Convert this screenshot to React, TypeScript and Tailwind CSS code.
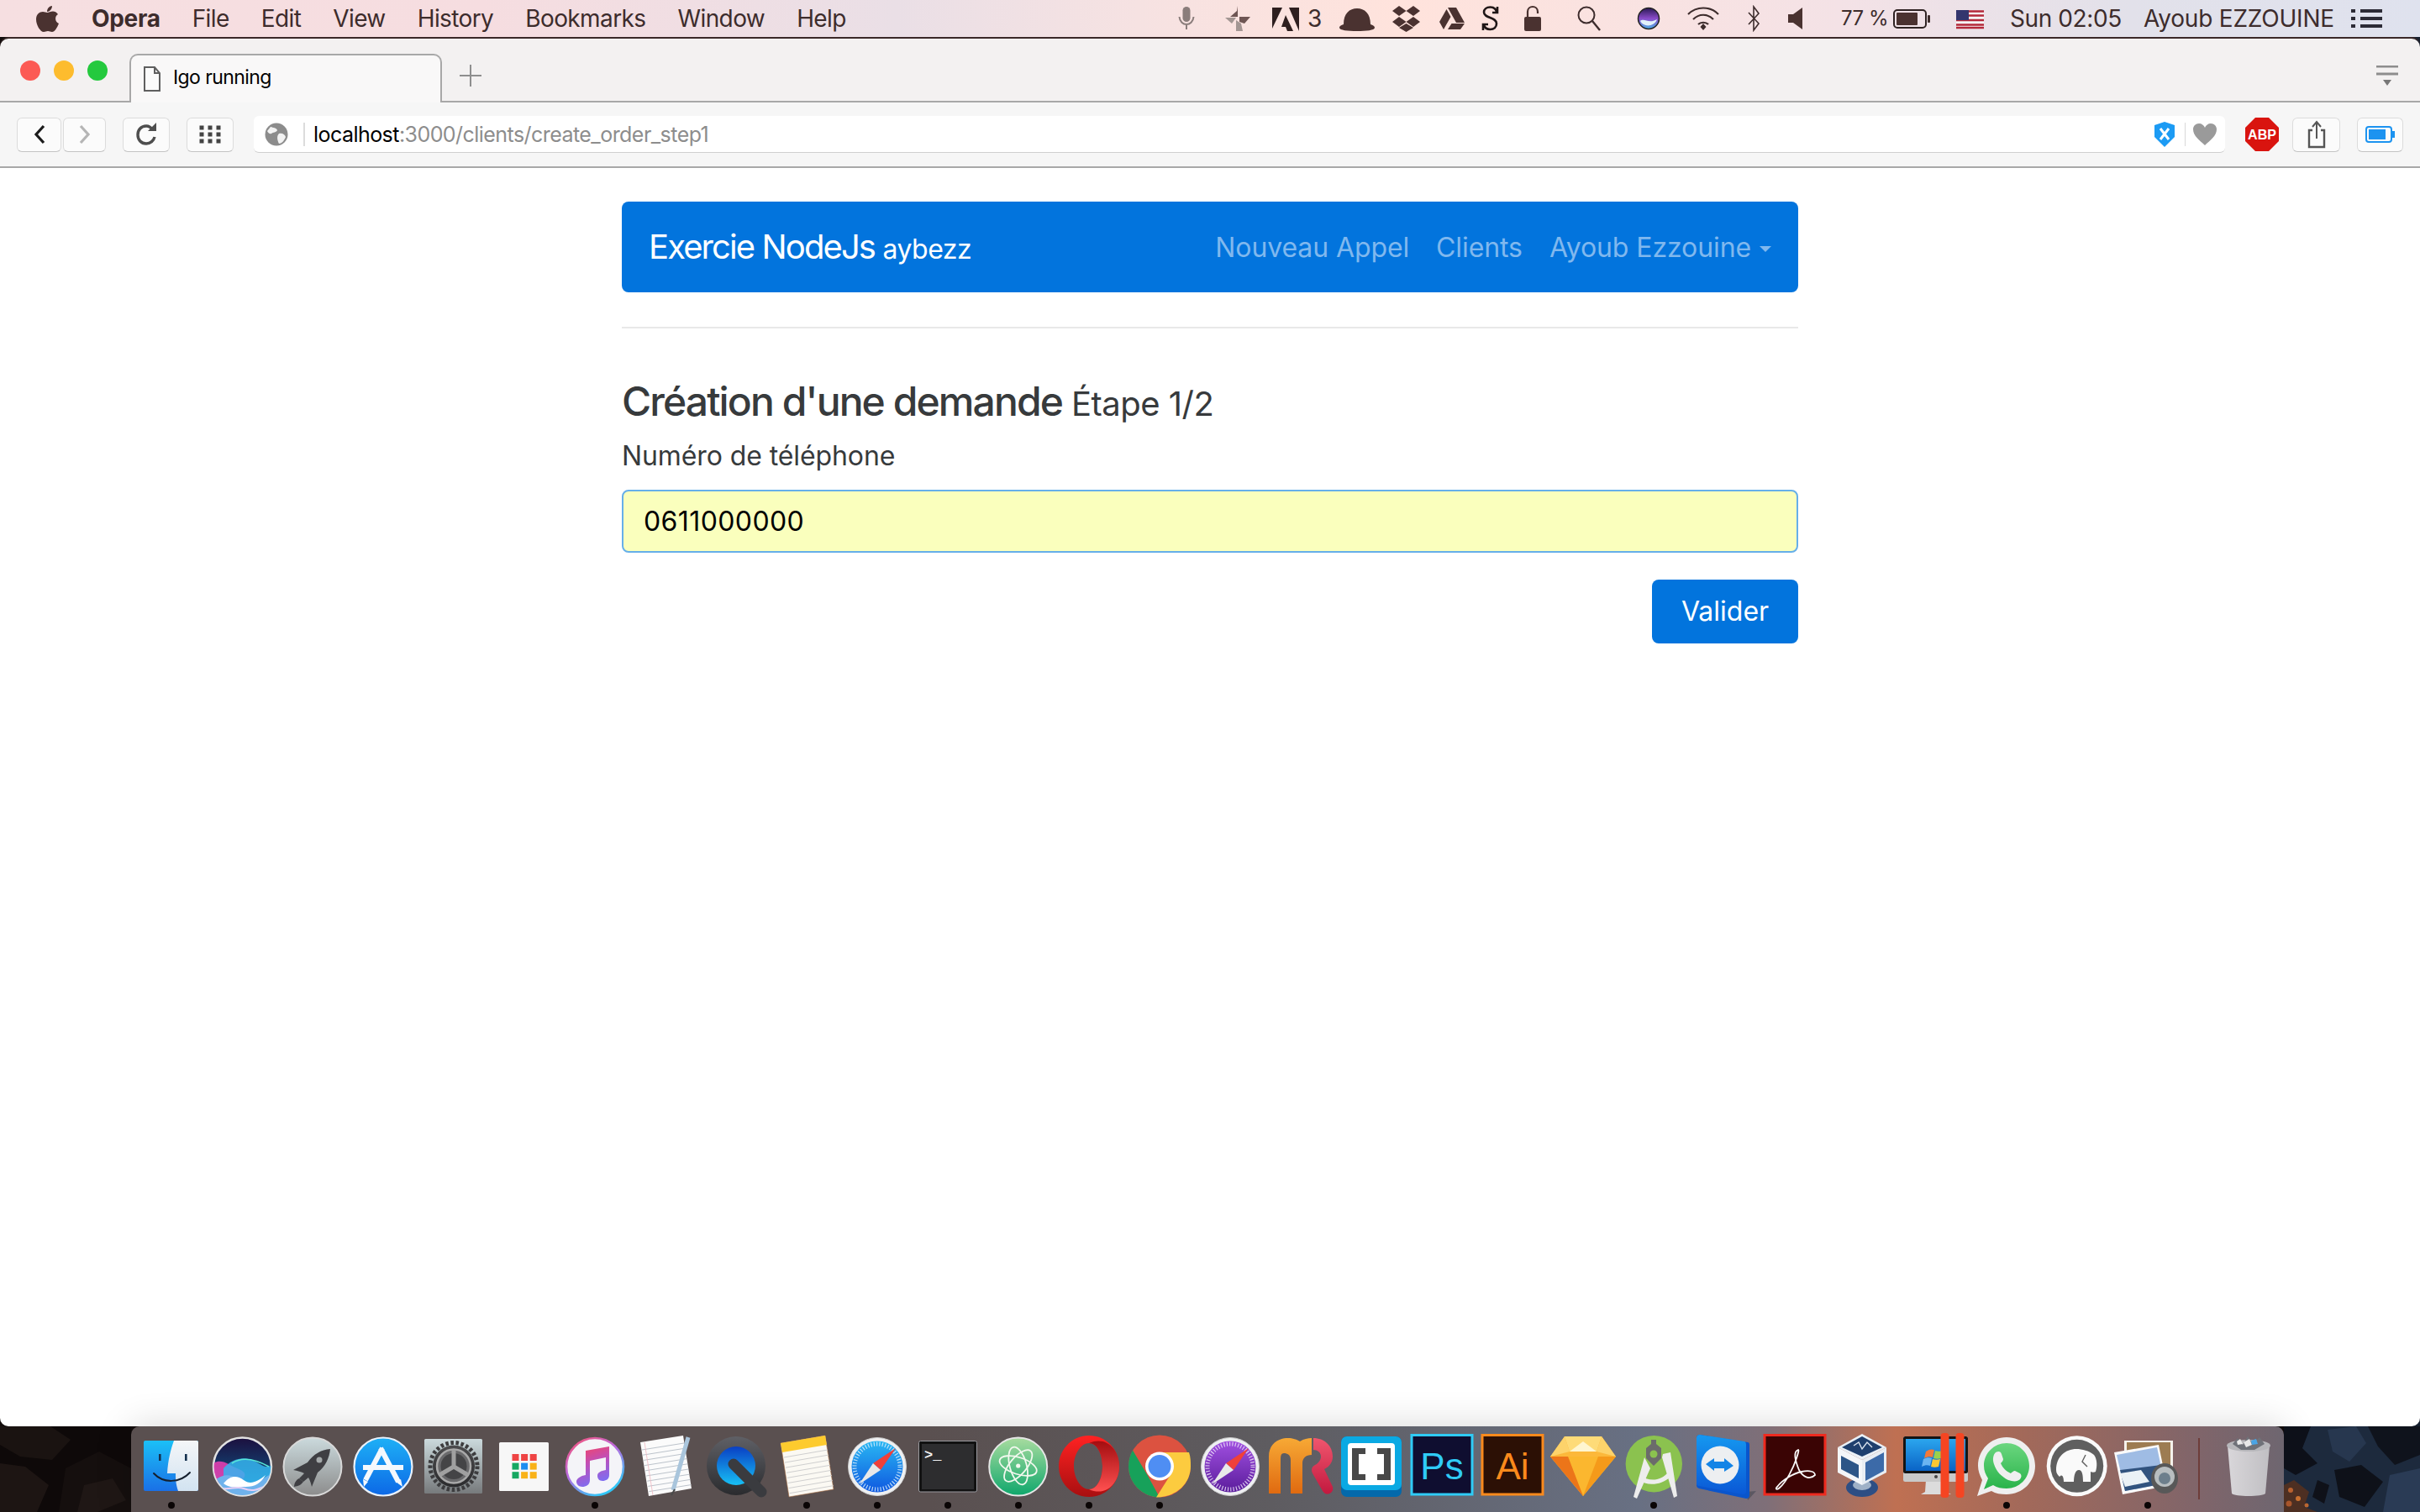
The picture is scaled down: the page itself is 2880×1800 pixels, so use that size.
import React from "react";

type SvgProps = { children: React.ReactNode };
const V = ({ children }: SvgProps) => (
  <svg viewBox="0 0 84 84" className="w-[84px] h-[84px] block overflow-visible">{children}</svg>
);
const LG = ({ id, a, b, c, x2 = 0, y2 = 1 }: { id: string; a: string; b: string; c?: string; x2?: number; y2?: number }) => (
  <linearGradient id={id} x1="0" y1="0" x2={x2} y2={y2}>
    <stop offset="0" stopColor={a} />
    {c ? <stop offset="0.5" stopColor={c} /> : null}
    <stop offset="1" stopColor={b} />
  </linearGradient>
);
const paperLines = (x0: number, y0: number, x1: number, y1: number, dx: number, dy: number, n: number, color: string) =>
  Array.from({ length: n }, (_, i) => (
    <line key={i} x1={x0 + dx * i} y1={y0 + dy * i} x2={x1 + dx * i} y2={y1 + dy * i} stroke={color} strokeWidth="1" />
  ));
const compassTicks = (color: string) => (
  <circle cx="42" cy="42" r="27" fill="none" stroke={color} strokeWidth="5" strokeDasharray="1.2 2.2" opacity="0.85" />
);

const Finder = () => (
  <V>
    <defs><LG id="fa" a="#1bc0f7" b="#1a70e6" /><LG id="fb" a="#f4f6f8" b="#d2e3f1" /></defs>
    <rect x="9" y="11" width="65" height="60" rx="2" fill="url(#fa)" />
    <path d="M45 11H72a2 2 0 0 1 2 2V69a2 2 0 0 1-2 2H50C47 62 47 56 47 50H37C38 34 41 22 45 11Z" fill="url(#fb)" />
    <rect x="27" y="27" width="2.6" height="8" fill="#15314f" />
    <rect x="58" y="27" width="2.6" height="8" fill="#15314f" />
    <path d="M21 50C32 62 52 62 64 49" fill="none" stroke="#15202e" strokeWidth="2" strokeLinecap="round" />
  </V>
);
const Siri = () => (
  <V>
    <defs>
      <LG id="sa" a="#1c0f3e" b="#0f86ad" c="#143a6a" />
      <clipPath id="sc"><circle cx="42.5" cy="42" r="34" /></clipPath>
    </defs>
    <circle cx="42.5" cy="42" r="34.5" fill="url(#sa)" stroke="#e2e2e2" strokeWidth="2.4" />
    <g clipPath="url(#sc)">
      <path d="M8 38C18 32 26 40 36 44S50 52 38 62L8 62Z" fill="#e23fb0" opacity="0.9" />
      <path d="M20 44C32 30 48 30 58 36S72 44 78 40V62H20Z" fill="#35b5f0" opacity="0.85" />
      <path d="M30 38C42 30 56 32 74 42" fill="none" stroke="#57e6d8" strokeWidth="1.6" />
      <path d="M8 60C18 50 28 50 38 58S58 62 78 50V80H8Z" fill="#6fb2ec" />
      <path d="M20 62C28 52 36 52 44 58S60 60 70 52C64 62 58 66 46 66S28 68 20 62Z" fill="#ffffff" />
      <path d="M14 66C24 72 34 64 44 68S60 70 72 64" fill="none" stroke="#e8d0f5" strokeWidth="2" />
    </g>
  </V>
);
const Launchpad = () => (
  <V>
    <defs><LG id="la" a="#cbdadd" b="#8c8c8c" /></defs>
    <circle cx="42" cy="42" r="34.5" fill="url(#la)" stroke="#d9d9d9" strokeWidth="2" />
    <path d="M63 21C52 22 43 27 36 37L19 46C24 47 29 48 32 50L26 56L31 60L37 55C39 58 40 62 41 66L48 49C57 42 62 32 63 21Z" fill="#3f3f43" />
    <path d="M26 56C22 58 20 62 20 66C25 65 28 64 31 60Z" fill="#3f3f43" />
    <circle cx="50" cy="34" r="3.5" fill="#a4a9aa" />
  </V>
);
const AppStore = () => (
  <V>
    <defs><LG id="aa" a="#1eb0f6" b="#0c68e6" /></defs>
    <circle cx="42" cy="42" r="34.5" fill="url(#aa)" stroke="#eaf2fb" strokeWidth="2.2" />
    <rect x="18" y="40" width="48" height="6" fill="#f4f8fd" />
    <path d="M41 20L21 58" stroke="#f4f8fd" strokeWidth="6" />
    <path d="M39 20L60 60" stroke="#f4f8fd" strokeWidth="6" />
    <path d="M18 57L24 60L19 66Z M57 60L63 57L65 66Z" fill="#f4f8fd" />
  </V>
);
const Prefs = () => (
  <V>
    <defs><LG id="pa" a="#cbdadd" b="#777a7c" /><LG id="pb" a="#4c4c4e" b="#2b2b2d" /></defs>
    <rect x="7" y="9" width="69" height="65" rx="1.5" fill="url(#pa)" />
    <circle cx="42" cy="41.5" r="28" fill="none" stroke="#3c3c3e" strokeWidth="5" strokeDasharray="3.5 2.6" />
    <circle cx="42" cy="41.5" r="25" fill="url(#pb)" />
    <circle cx="42" cy="41.5" r="20" fill="#6a6a6c" stroke="#a9a9a9" strokeWidth="2.5" />
    <circle cx="42" cy="41.5" r="15.5" fill="#444446" />
    <path d="M42 42L42 22M42 42L59 52M42 42L25 52" stroke="#a0a0a0" strokeWidth="5" />
  </V>
);
const GridApp = () => {
  const cols = ["#ef4444", "#ef4444", "#ef4444", "#16a862", "#1d8df0", "#f9b218", "#16a862", "#f9b218", "#f9b218"];
  return (
    <V>
      <rect x="12" y="13" width="59" height="58" rx="1.5" fill="#f7f7f7" />
      {cols.map((c, i) => (
        <rect key={i} x={27.5 + (i % 3) * 10.6} y={27 + Math.floor(i / 3) * 10.6} width="8" height="8" fill={c} />
      ))}
    </V>
  );
};
const Music = () => (
  <V>
    <defs><LG id="ma" a="#fb5270" b="#30c6f7" c="#b96ae0" x2={0.6} /><LG id="mb" a="#f8445f" b="#7f6cf0" c="#c04fb8" x2={0.3} /></defs>
    <circle cx="42" cy="42" r="34" fill="#f4f4f8" stroke="url(#ma)" strokeWidth="2.6" />
    <path d="M31 23L59 18V52C59 57 55 59 51 59C47 59 45 56 45 53C45 49 49 47 55 46V31L36 35V58C36 64 31 66 27 66C23 66 20 63 20 60C20 56 25 53 31 52Z" fill="url(#mb)" />
  </V>
);
const TextEdit = () => (
  <V>
    <polygon points="12,13 63,5 73,68 22,77" fill="#fbfbfb" />
    {paperLines(14, 22, 64, 14, 1.05, 6.2, 9, "#bcc3cb")}
    <path d="M17 13L27 76" stroke="#f0b8c0" strokeWidth="0.8" />
    <path d="M69 7L51 70" stroke="#a9c5dc" strokeWidth="5" />
    <path d="M53 69L49 76" stroke="#4a4a4a" strokeWidth="2" />
  </V>
);
const QuickTime = () => (
  <V>
    <defs><LG id="qa" a="#5f6066" b="#2a2b2e" /><LG id="qb" a="#0a3fc4" b="#17c0f5" /></defs>
    <circle cx="42" cy="41" r="35" fill="url(#qa)" />
    <circle cx="42" cy="41" r="23" fill="url(#qb)" />
    <path d="M39 39L72 72" stroke="#3a3b3f" strokeWidth="13" strokeLinecap="round" />
  </V>
);
const Notes = () => (
  <V>
    <polygon points="11,14 64,5 74,69 21,78" fill="#fbf9f3" stroke="#a5693f" strokeWidth="0.6" />
    <polygon points="11,14 64,5 66,16 13,25" fill="#fdcb2e" />
    {paperLines(15, 31, 67, 22, 0.95, 6.1, 8, "#cfcfcf")}
  </V>
);
const Safari = () => (
  <V>
    <defs><LG id="na" a="#29b7f3" b="#0f58e0" /></defs>
    <circle cx="42" cy="42" r="34.5" fill="#eef0f2" stroke="#d0d0d0" strokeWidth="1" />
    <circle cx="42" cy="42" r="30.5" fill="url(#na)" />
    {compassTicks("#d5ecfb")}
    <polygon points="64,20 37,38 46,46" fill="#f0403a" />
    <polygon points="20.5,63 37,38 46,46" fill="#e9e9e9" />
  </V>
);
const Terminal = () => (
  <V>
    <rect x="7.5" y="11.5" width="69" height="60.5" rx="2" fill="#111" stroke="#9a9aa0" strokeWidth="1" />
    <rect x="11" y="15" width="62" height="54" fill="#2d2d2f" />
    <text x="14" y="33" fill="#f2f2f2" fontFamily="'Liberation Mono',monospace" fontSize="17" fontWeight="700">&gt;_</text>
  </V>
);
const Atom = () => (
  <V>
    <defs><LG id="ta" a="#a8dc9f" b="#0fa76c" /></defs>
    <circle cx="41.7" cy="42" r="34.5" fill="url(#ta)" stroke="#e6e6e6" strokeWidth="2" />
    <g fill="none" stroke="#f2f8ee" strokeWidth="1.8">
      <ellipse cx="41.7" cy="41" rx="23" ry="10" transform="rotate(18 41.7 41)" />
      <ellipse cx="41.7" cy="41" rx="23" ry="10" transform="rotate(75 41.7 41)" />
      <ellipse cx="41.7" cy="41" rx="23" ry="10" transform="rotate(-50 41.7 41)" />
    </g>
    <circle cx="41.7" cy="41" r="2.6" fill="#f2f8ee" />
  </V>
);
const Opera = () => (
  <V>
    <defs>
      <LG id="oa" a="#ff2222" b="#a80f10" />
      <LG id="ob" a="#a30d10" b="#ff5050" />
    </defs>
    <path fillRule="evenodd" d="M42 5C22 5 6 21 6 41.5S22 78 42 78S78 62 78 41.5S62 5 42 5ZM42 14C51 14 58 26 58 41.5S51 69 42 69S24 57 24 41.5S33 14 42 14Z" fill="url(#oa)" />
    <path d="M42 14C51 14 58 26 58 41.5S51 69 42 69C62 78 78 62 78 41.5S62 5 42 14Z" fill="url(#ob)" />
  </V>
);
const Chrome = () => (
  <V>
    <circle cx="42" cy="41.5" r="37" fill="#dc5240" />
    <path d="M10 22.5L28 53L42 78.5C22 78.5 5 62 5 41.5C5 34 7 28 10 22.5Z" fill="#17a15a" />
    <path d="M42 25H77C79 31 79 36 79 41.5C79 62 62 78.5 38 78.5L56 50Z" fill="#fccb3f" />
    <circle cx="42" cy="41.5" r="17" fill="#fff" />
    <circle cx="42" cy="41.5" r="13.5" fill="#4f8ef3" />
  </V>
);
const Webkit = () => (
  <V>
    <defs><LG id="wa" a="#a04fe0" b="#5b1d9c" /></defs>
    <circle cx="42" cy="42" r="34.5" fill="#eef0f2" stroke="#cccccc" strokeWidth="1" />
    <circle cx="42" cy="42" r="30.5" fill="url(#wa)" />
    {compassTicks("#eadcf7")}
    <polygon points="64,20 37,38 46,46" fill="#f0403a" />
    <polygon points="20.5,63 37,38 46,46" fill="#e9e9e9" />
  </V>
);
const MR = () => (
  <V>
    <defs><LG id="ra" a="#f7a935" b="#e06a10" /><LG id="rb" a="#f0566e" b="#c2193f" /></defs>
    <path d="M4 74V30C4 16 14 8 27 8C32 8 38 10 41 12C46 9 50 8 55 8V28C48 28 44 32 44 38V74H30V34C30 28 26 26 22 26C18 26 18 30 18 34V74Z" fill="url(#ra)" />
    <path d="M57 8C70 8 80 17 80 30C80 37 76 42 70 45L80 66C82 74 72 78 68 71L56 50C54 46 55 42 59 40C63 38 66 34 66 30C66 25 62 22 57 22Z" fill="url(#rb)" />
  </V>
);
const Brackets = () => (
  <V>
    <rect x="6" y="6" width="72" height="72" rx="7" fill="#0469ab" />
    <rect x="6" y="6" width="72" height="64" rx="7" fill="#0aa9e3" />
    <rect x="14" y="14" width="56" height="50" rx="4" fill="#ffffff" />
    <path d="M35 20H19V58H35V51H27V27H35Z" fill="#484848" />
    <path d="M49 20H65V58H49V51H57V27H49Z" fill="#484848" />
  </V>
);
const AdobeBox = ({ t, bg, c }: { t: string; bg: string; c: string }) => (
  <V>
    <rect x="6" y="4.5" width="72" height="70.5" fill={bg} stroke={c} strokeWidth="3" />
    <text x="42" y="57" textAnchor="middle" fill={c} fontFamily="'Liberation Sans',sans-serif" fontSize="44">{t}</text>
  </V>
);
const Sketch = () => (
  <V>
    <polygon points="20,6 64,6 81,30 42,77 3,30" fill="#fcb83a" />
    <polygon points="20,6 64,6 58,24 26,24" fill="#fedb78" />
    <polygon points="26,24 58,24 42,12" fill="#fff6d0" />
    <polygon points="3,30 81,30 42,77" fill="#f59a1a" />
    <polygon points="24,30 60,30 42,77" fill="#fbb72f" />
    <polygon points="3,30 20,6 26,24" fill="#fdd36b" />
    <polygon points="81,30 64,6 58,24" fill="#fdd36b" />
    <polygon points="3,30 24,30 42,77" fill="#e4571a" opacity="0.55" />
  </V>
);
const AndroidStudio = () => (
  <V>
    <circle cx="42.3" cy="38.7" r="33.7" fill="#8bc24f" />
    <path d="M31 31L18 78L22 80L38 44Z M52 31L66 79L70 77L62 25L53 27Z" fill="#ededed" />
    <path d="M26 52C36 60 50 60 60 48L62 54C50 65 34 65 24 58Z" fill="#ededed" />
    <path d="M39 10H45V15L51 20V32L42 41L33 32V20L39 15Z" fill="#6b6b6b" />
    <circle cx="42" cy="27" r="4.5" fill="#8bc24f" />
  </V>
);
const TeamViewer = () => (
  <V>
    <defs><LG id="va" a="#1598f0" b="#0a58d6" /></defs>
    <path d="M68 72L80 71L70 82Z" fill="#3a3f4c" opacity="0.5" />
    <path d="M13 4L70 13C71 13 72 14 72 16V76C72 79 70 80 68 80L12 68C10 67 9 66 9 64V8C9 5 11 4 13 4Z" fill="#0a55cc" />
    <path d="M13 4L66 12C67 12 68 14 68 16V72C68 74 66 75 64 75L12 65C10 65 9 64 9 62V8C9 5 11 4 13 4Z" fill="url(#va)" />
    <circle cx="37" cy="40" r="22.5" fill="#edeff1" />
    <path d="M20 39L30 32V36H42V32L53 41L42 48V44H30V47Z" fill="#1484e6" />
  </V>
);
const Acrobat = () => (
  <V>
    <rect x="6" y="4.5" width="72" height="70.5" fill="#3a0404" stroke="#ee2a1f" strokeWidth="3" />
    <path d="M46 22C40 24 42 34 47 46C52 55 60 58 66 52C66 48 60 46 50 48C40 50 27 58 21 66C18 69 21 70 24 67C32 60 40 44 44 32C46 26 47 22 46 22Z" fill="none" stroke="#f8f8f8" strokeWidth="1.8" />
  </V>
);
const VBox = () => (
  <V>
    <ellipse cx="38" cy="67" rx="19" ry="11" fill="#2d4e84" />
    <ellipse cx="38" cy="64" rx="11" ry="6" fill="#9fb1c7" />
    <polygon points="38,3 67,19 38,34 9,19" fill="#eaf0f6" />
    <polygon points="38,6 62,19 38,30 14,19" fill="#1e3f6e" />
    <polygon points="9,19 38,34 38,64 9,49" fill="#f4f6f9" />
    <polygon points="13,29 34,40 34,56 13,45" fill="#2c5587" />
    <polygon points="67,19 38,34 38,64 67,49" fill="#e8edf3" />
    <polygon points="42,37 64,25 64,47 42,59" fill="#3c6aa8" />
    <path d="M28 17L34 13L38 21L44 13L50 19" fill="none" stroke="#dbe4ef" strokeWidth="1.4" />
  </V>
);
const Parallels = () => (
  <V>
    <defs><LG id="xa" a="#2ba6ee" b="#0a63c6" /></defs>
    <path d="M30 58H52L54 72L60 75H24L29 72Z" fill="#dcdcdc" />
    <rect x="3" y="6" width="77" height="54" rx="2.5" fill="#c9c9c9" />
    <rect x="3" y="6" width="77" height="44" rx="2.5" fill="#141414" />
    <rect x="6" y="9" width="71" height="38" fill="url(#xa)" />
    <path d="M30 24C34 21 37 21 40 22L38 31C35 30 32 30 28 32Z" fill="#f2793a" />
    <path d="M41 23C44 24 47 24 50 23L48 32C45 33 42 33 39 32Z" fill="#9cd14a" />
    <path d="M27 33C31 31 34 31 37 32L35 41C32 40 29 40 25 42Z" fill="#6ab4f2" />
    <path d="M38 33C41 34 44 34 47 33L45 42C42 43 39 43 36 42Z" fill="#f9c733" />
    <circle cx="42" cy="54" r="2" fill="#444" />
    <rect x="47.5" y="2" width="10" height="77" rx="4" fill="#f54522" />
    <rect x="65.5" y="2" width="10" height="77" rx="4" fill="#f54522" />
  </V>
);
const WhatsApp = () => (
  <V>
    <defs><LG id="ha" a="#6bd67f" b="#29b34a" /></defs>
    <path d="M7 77L13 58C10 52 8 47 8 41C8 22 23 7 42 7S76 22 76 41S61 75 42 75C35 75 29 74 24 71Z" fill="#efefef" />
    <path d="M15 69L20 56C17 51 15 47 15 41C15 26 27 14 42 14S69 26 69 41S57 68 42 68C36 68 31 67 26 64Z" fill="url(#ha)" />
    <path d="M29 25C33 23 35 24 36 27L38 33C38 35 36 37 35 38C37 43 42 48 47 50C48 49 50 47 52 47L58 50C60 52 60 54 58 57C55 60 50 60 44 58C36 54 30 48 27 39C25 33 26 28 29 25Z" fill="#efefef" />
  </V>
);
const Mamp = () => (
  <V>
    <circle cx="41.7" cy="41.3" r="36" fill="#fafafa" />
    <circle cx="41.7" cy="41.3" r="31.5" fill="#5f5f5f" />
    <path d="M17 46C17 30 28 21 41 21C48 21 56 23 62 28C66 33 66 42 64 48C62 49 60 49 58 48L58 60H49C49 52 48 46 44 46C40 46 38 52 38 60H26C26 54 24 50 21 54C19 52 17 50 17 46Z" fill="#fafafa" />
    <path d="M52 28L48 36L54 42" fill="none" stroke="#5f5f5f" strokeWidth="1.4" />
  </V>
);
const Preview = () => (
  <V>
    <polygon points="14,11 72,11 72,58 14,58" fill="#f5f2ec" />
    <rect x="17" y="13" width="52" height="42" fill="#9d7c52" />
    <polygon points="2,25 55,16 65,65 12,75" fill="#fafafa" />
    <polygon points="5,28 53,19 62,62 15,71" fill="#9fbce4" />
    <polygon points="9,46 58,40 62,62 15,71" fill="#31537f" />
    <polygon points="9,50 34,46 44,60 15,66" fill="#eaf1f6" />
    <ellipse cx="62" cy="56" rx="16" ry="18" fill="#585858" />
    <ellipse cx="62" cy="54" rx="12" ry="12" fill="#b8bec0" />
    <ellipse cx="62" cy="56" rx="7" ry="7" fill="#6d7f8c" />
  </V>
);
const Trash = () => (
  <V>
    <defs><LG id="za" a="#e3e3e6" b="#c9c9cc" x2={1} y2={0} /></defs>
    <path d="M18 17H68L63 74C60 78 26 78 23 74Z" fill="url(#za)" opacity="0.9" />
    <ellipse cx="43" cy="17" rx="26" ry="7" fill="#b7b7bb" />
    <path d="M24 15L30 8L36 16L42 6L48 15L56 7L62 15L50 22H34Z" fill="#6f7279" />
    <path d="M37 13L44 9L47 16L40 19Z" fill="#e8e8e8" />
    <path d="M46 11L52 9L54 15L47 16Z" fill="#49a5e6" />
    <path d="M29 12L33 9L36 15L30 16Z" fill="#ececec" />
  </V>
);

const dockItems: { icon: React.ReactNode; running?: boolean }[] = [
  { icon: <Finder />, running: true },
  { icon: <Siri /> },
  { icon: <Launchpad /> },
  { icon: <AppStore /> },
  { icon: <Prefs /> },
  { icon: <GridApp /> },
  { icon: <Music />, running: true },
  { icon: <TextEdit /> },
  { icon: <QuickTime /> },
  { icon: <Notes />, running: true },
  { icon: <Safari />, running: true },
  { icon: <Terminal />, running: true },
  { icon: <Atom />, running: true },
  { icon: <Opera />, running: true },
  { icon: <Chrome />, running: true },
  { icon: <Webkit /> },
  { icon: <MR /> },
  { icon: <Brackets /> },
  { icon: <AdobeBox t="Ps" bg="#0f0e30" c="#2fcbf6" /> },
  { icon: <AdobeBox t="Ai" bg="#2c1005" c="#fb8a1c" /> },
  { icon: <Sketch /> },
  { icon: <AndroidStudio />, running: true },
  { icon: <TeamViewer /> },
  { icon: <Acrobat /> },
  { icon: <VBox /> },
  { icon: <Parallels /> },
  { icon: <WhatsApp />, running: true },
  { icon: <Mamp /> },
  { icon: <Preview />, running: true },
];

const brown = "#4a3230";
const MI = ({ w, ml, children }: { w: number; ml: string; children: React.ReactNode }) => (
  <svg viewBox={`0 0 ${w} 32`} width={w} height={32} className={`block shrink-0 ${ml}`}>{children}</svg>
);

function MenuBar() {
  return (
    <div className="h-[44px] shrink-0 flex items-center pl-[42px] pr-[45px] text-[28px] text-[#3d2c2c] bg-[linear-gradient(90deg,#f6dfe1_0%,#f6dde0_20%,#eadfe6_37%,#f6e2e2_47%,#ffe3dc_58%,#f4e2e6_76%,#e2e1ea_88%,#dfe2ee_100%)]">
      <svg viewBox="0 0 28 32" width={28} height={32} className="block shrink-0">
        <path d="M20 1C20 5 17 8 14 8C14 4 17 1 20 1ZM14 9C16 9 18 7.5 21 7.5C23 7.5 25.5 8.5 27 11C23 13 23 20 28 22C26 27 23 32 20 32C18 32 17 31 15 31C13 31 12 32 10 32C6 32 1 24 1 17C1 11 5 8 9 8C11 8 13 9 14 9Z" fill={brown} />
      </svg>
      <div className="flex items-center gap-[38px] ml-[39px] tracking-[-0.6px]">
        <span className="font-bold text-[#3d2c2c] tracking-[-0.3px]">Opera</span>
        <span>File</span>
        <span>Edit</span>
        <span>View</span>
        <span>History</span>
        <span>Bookmarks</span>
        <span>Window</span>
        <span>Help</span>
      </div>
      <div className="ml-auto flex items-center">
        <MI w={20} ml="">
          <rect x="5.5" y="2" width="9" height="18" rx="4.5" fill="#8a7d7b" />
          <path d="M1.5 14C2 20 6 23 10 23S18 20 18.5 14M10 23V29" fill="none" stroke="#8a7d7b" strokeWidth="2" />
        </MI>
        <MI w={31} ml="ml-[35px]">
          <path d="M16 1L16 14L7 14L15 7Z M18 14H31L24 22L18 20Z" fill="#6e5553" />
          <path d="M1 15H14L9 22Z M14 18V31L22 31L20 22Z" fill="#a39693" />
        </MI>
        <MI w={32} ml="ml-[26px]">
          <path d="M0 3H12L0 28Z M20 3H32V31ZM16 12L25 31H18L16 26H11Z" fill="#2e1f1f" />
        </MI>
        <span className="w-[15px] ml-[10px] text-[#3d2c2c]">3</span>
        <MI w={42} ml="ml-[23px]">
          <path d="M5 23C5 10 12 4 21 4S37 10 37 23C41 24 42 26 42 27C42 30 32 31 21 31S0 30 0 27C0 26 1 24 5 23Z" fill={brown} />
        </MI>
        <MI w={33} ml="ml-[21px]">
          <path d="M8 1L16.5 7L8 13L0 7ZM25 1L33 7L25 13L16.5 7ZM8 14L16.5 20L8 26L0 20ZM25 14L33 20L25 26L16.5 20ZM8 27L16.5 22L25 27L16.5 32Z" fill={brown} />
        </MI>
        <MI w={30} ml="ml-[23px]">
          <path d="M10 3H20L30 21H20ZM8.5 5L13.5 14L5 29L0 20ZM14.5 22H30L25 29H10Z" fill={brown} />
        </MI>
        <MI w={21} ml="ml-[20px]">
          <path d="M18 8C17 4 14 2.5 10.5 2.5C6 2.5 3 5 3 8.5C3 16 18 14 18 22C18 26 15 29 10.5 29C7 29 4 27 3 24M19 2V9H13M2 30V23H8" fill="none" stroke="#1f1616" strokeWidth="2.6" />
        </MI>
        <MI w={20} ml="ml-[30px]">
          <path d="M4 14V8C4 4 7 2 10 2S16 4 16 8V10" fill="none" stroke={brown} strokeWidth="2.2" />
          <rect x="0" y="14" width="20" height="17" rx="2" fill={brown} />
        </MI>
        <MI w={28} ml="ml-[43px]">
          <circle cx="11" cy="12" r="9.5" fill="none" stroke="#3d2c2c" strokeWidth="2" />
          <path d="M18 19L27 30" stroke="#3d2c2c" strokeWidth="2.4" />
        </MI>
        <MI w={30} ml="ml-[42px]">
          <defs><LG id="tsa" a="#2a1a55" b="#4fb1e8" c="#8a4bc9" /></defs>
          <circle cx="15" cy="16" r="12.5" fill="url(#tsa)" stroke="#222" strokeWidth="1.5" />
          <path d="M5 19C10 15 15 23 25 17C22 26 9 27 5 19Z" fill="#e2f1fa" />
        </MI>
        <MI w={40} ml="ml-[30px]">
          <path d="M2 11C12 1 28 1 38 11M8 17C15 10 25 10 32 17M14 23C17 20 23 20 26 23" fill="none" stroke="#3d2c2c" strokeWidth="2.2" />
          <path d="M16.5 26L20 22L23.5 26L20 30Z" fill="#3d2c2c" />
        </MI>
        <MI w={18} ml="ml-[31px]">
          <path d="M3 9L15 22L9 30V2L15 10L3 23" fill="none" stroke="#3d2c2c" strokeWidth="1.6" />
        </MI>
        <MI w={18} ml="ml-[32px]">
          <path d="M0 11H6L17 3V29L6 21H0Z" fill={brown} />
        </MI>
        <span className="w-[52px] ml-[45px] whitespace-nowrap text-[24px] tracking-[-0.5px] text-[#3d2c2c]">77 %</span>
        <MI w={45} ml="ml-[10px]">
          <rect x="1" y="6" width="38" height="21" rx="4" fill="none" stroke="#2e2222" strokeWidth="2" />
          <rect x="4" y="9" width="25" height="15" rx="1" fill={brown} />
          <rect x="41" y="12" width="3" height="9" rx="1" fill="#3d2c2c" />
        </MI>
        <MI w={33} ml="ml-[30px]">
          <rect x="0" y="6" width="33" height="22" fill="#f5f5f5" />
          <path d="M0 7.5H33M0 12.5H33M0 18H33M0 23.5H33M0 27H33" stroke="#b4293a" strokeWidth="2.4" />
          <rect x="0" y="6" width="15" height="12" fill="#34366e" />
        </MI>
        <span className="w-[132px] ml-[31px] whitespace-nowrap tracking-[-0.4px]">Sun 02:05</span>
        <span className="w-[228px] ml-[27px] whitespace-nowrap tracking-[-0.2px]">Ayoub EZZOUINE</span>
        <MI w={37} ml="ml-[19px]">
          <path d="M0 7H5M11 7H37M0 16H5M11 16H37M0 25H5M11 25H37" stroke="#2c2b36" strokeWidth="4" />
        </MI>
      </div>
    </div>
  );
}

const ToolBtn = ({ w, children, ml = "" }: { w: string; children: React.ReactNode; ml?: string }) => (
  <div className={`${w} ${ml} h-[41px] shrink-0 rounded-[6px] bg-[#fbfbfb] border border-[#dcdcdc] border-b-[#c4c4c4] flex items-center justify-center`}>
    {children}
  </div>
);

function TabBar() {
  return (
    <div className="h-[76px] shrink-0 flex items-end bg-[#f3f1f1] border-b-[2px] border-[#a8a8a8] rounded-t-[10px] pl-[24px] pr-[26px]">
      <div className="flex items-center gap-[16px] h-[74px] pt-[2px] self-center">
        <span className="w-[24px] h-[24px] rounded-full bg-[#fc5a54]" />
        <span className="w-[24px] h-[24px] rounded-full bg-[#fdbc2e]" />
        <span className="w-[24px] h-[24px] rounded-full bg-[#24c93e]" />
      </div>
      <div className="relative -mb-[2px] ml-[26px] w-[372px] h-[58px] rounded-t-[10px] border-x-[2px] border-t-[2px] border-[#a8a8a8] bg-[#f9f8f8] flex items-center pl-[14px]">
        <svg viewBox="0 0 22 30" width={22} height={30} className="block shrink-0">
          <path d="M2 1H14L20 8V29H2ZM14 1V8H20" fill="#fbfbfb" stroke="#5f5f5f" strokeWidth="2" />
        </svg>
        <span className="ml-[14px] pb-[3px] text-[23px] text-black tracking-[-0.6px]">Igo running</span>
      </div>
      <svg viewBox="0 0 28 28" width={28} height={28} className="block ml-[20px] mb-[16px] self-end">
        <path d="M14 1V27M1 14H27" stroke="#8e8e8e" strokeWidth="2" />
      </svg>
      <svg viewBox="0 0 26 26" width={26} height={26} className="block ml-auto mb-[16px] self-end">
        <path d="M0 1H26M0 10H26" stroke="#8d8d8d" strokeWidth="3" />
        <path d="M8 17H18L13 24Z" fill="#777" />
      </svg>
    </div>
  );
}

function ToolBar() {
  return (
    <div className="h-[78px] shrink-0 flex items-center bg-[#f6f6f6] border-b-[2px] border-[#a8a8a8] pl-[20px] pr-[20px]">
      <ToolBtn w="w-[53px]">
        <svg viewBox="0 0 16 24" width={16} height={24}><path d="M13 2L4 12L13 22" fill="none" stroke="#1c1c1c" strokeWidth="3.2" /></svg>
      </ToolBtn>
      <ToolBtn w="w-[51px]" ml="ml-[2px]">
        <svg viewBox="0 0 16 24" width={16} height={24}><path d="M3 2L12 12L3 22" fill="none" stroke="#b5b5b5" strokeWidth="3.2" /></svg>
      </ToolBtn>
      <ToolBtn w="w-[56px]" ml="ml-[20px]">
        <svg viewBox="0 0 26 28" width={26} height={28}>
          <path d="M21 9C19 6 16 4 13 4C7 4 3 8.5 3 14.5S7 25 13 25C18 25 22 21.5 23 17" fill="none" stroke="#4e4e4e" strokeWidth="3.4" />
          <path d="M15 10H25V0Z" fill="#4e4e4e" />
        </svg>
      </ToolBtn>
      <ToolBtn w="w-[56px]" ml="ml-[20px]">
        <svg viewBox="0 0 28 24" width={28} height={24}>
          {[0, 1, 2, 3, 4, 5, 6, 7, 8].map((i) => (
            <rect key={i} x={1.5 + (i % 3) * 10} y={1.5 + Math.floor(i / 3) * 8} width="5" height="5" fill="#444" />
          ))}
        </svg>
      </ToolBtn>
      <div className="ml-[24px] flex-1 h-[44px] rounded-[6px] bg-white border-b border-[#cfcfcf] flex items-center pl-[13px] pr-[10px]">
        <svg viewBox="0 0 28 28" width={28} height={28} className="block shrink-0">
          <circle cx="14" cy="14" r="13.5" fill="#8c8c8c" />
          <path d="M7 5C10 6 14 6 15 9C14 12 10 11 8 13C6 14 4 12 3 10ZM17 13C21 12 24 14 25 17C23 22 20 25 17 25C15 21 14 16 17 13Z" fill="#f2f2f2" />
        </svg>
        <span className="w-[2px] h-[28px] bg-[#dcdcdc] ml-[18px] shrink-0" />
        <span className="ml-[10px] pt-[2px] text-[25px] tracking-[-0.55px] whitespace-nowrap text-[#8d8d8d]">
          <span className="text-black">localhost</span>:3000/clients/create_order_step1
        </span>
        <svg viewBox="0 0 24 30" width={24} height={30} className="block ml-auto shrink-0">
          <path d="M12 0L24 4V18L12 30L0 18V4Z" fill="#1c9bf4" />
          <path d="M7 8L17 21M17 8L7 21" stroke="#fff" strokeWidth="3" />
        </svg>
        <span className="w-[1px] h-[28px] bg-[#d9d9d9] ml-[12px] shrink-0" />
        <svg viewBox="0 0 28 26" width={28} height={26} className="block ml-[9px] shrink-0">
          <path d="M14 26C8 20 0 15 0 7C0 3 3 0 7 0C10 0 13 2 14 5C15 2 18 0 21 0C25 0 28 3 28 7C28 15 20 20 14 26Z" fill="#9a9a9a" />
        </svg>
      </div>
      <div className="relative ml-[24px] w-[40px] h-[40px] shrink-0">
        <svg viewBox="0 0 40 40" width={40} height={40} className="block">
          <polygon points="12,0 28,0 40,12 40,28 28,40 12,40 0,28 0,12" fill="#d9140f" />
          <text x="20" y="26" textAnchor="middle" fill="#fff" fontSize="16" fontWeight="700" fontFamily="'Liberation Sans',sans-serif">ABP</text>
        </svg>
      </div>
      <ToolBtn w="w-[57px]" ml="ml-[16px]">
        <svg viewBox="0 0 24 34" width={24} height={34}>
          <path d="M7 12H3V32H21V12H17" fill="none" stroke="#555" strokeWidth="2.4" />
          <path d="M12 22V3M7 8L12 2L17 8" fill="none" stroke="#555" strokeWidth="2" />
        </svg>
      </ToolBtn>
      <ToolBtn w="w-[55px]" ml="ml-[20px]">
        <svg viewBox="0 0 36 24" width={36} height={24}>
          <rect x="1" y="3" width="30" height="18" rx="3" fill="none" stroke="#1c93f0" strokeWidth="2" />
          <rect x="4" y="6" width="20" height="12" fill="#1c93f0" />
          <rect x="32" y="8" width="3" height="8" fill="#1c93f0" />
        </svg>
      </ToolBtn>
    </div>
  );
}

function Page() {
  return (
    <div className="flex-1 min-h-0 bg-white rounded-b-[10px] overflow-hidden">
      <div className="w-[1400px] mx-auto pt-[40px]">
        <nav className="h-[108px] rounded-[8px] bg-[#0274dd] flex items-center px-[32px]">
          <span className="text-[40px] text-white tracking-[-1.9px] whitespace-nowrap">
            Exercie NodeJs <small className="text-[32px] tracking-[-0.5px]">aybezz</small>
          </span>
          <div className="ml-auto flex items-center gap-[32px] pt-[1px] text-[32px] text-[#80b8ee] tracking-[-0.1px] whitespace-nowrap">
            <span>Nouveau Appel</span>
            <span>Clients</span>
            <span className="flex items-center">
              Ayoub Ezzouine
              <span className="ml-[10px] mt-[4px] border-x-[7px] border-x-transparent border-t-[7px] border-t-[#80b8ee]" />
            </span>
          </div>
        </nav>
        <hr className="mt-[41px] border-t-[2px] border-[#e8e8e8]" />
        <h3 className="mt-[51px] text-[48px] leading-[72px] font-medium text-[#373a3c] tracking-[-1.9px] whitespace-nowrap">
          Création d'une demande <small className="text-[40px] font-normal tracking-[-0.5px]">Étape 1/2</small>
        </h3>
        <label className="block mt-[2px] text-[32px] leading-[48px] text-[#373a3c] tracking-[-0.1px]">Numéro de téléphone</label>
        <input
          readOnly
          value="0611000000"
          className="block w-full mt-[16px] h-[75px] rounded-[8px] border-[2px] border-[#66afe9] bg-[#faffbd] px-[24px] text-[32px] tracking-[0.4px] text-black outline-none"
        />
        <div className="mt-[32px] flex justify-end">
          <button className="w-[174px] h-[76px] rounded-[8px] bg-[#0274dd] text-[32px] text-white">Valider</button>
        </div>
      </div>
    </div>
  );
}

function WallLeft() {
  return (
    <svg viewBox="0 0 156 102" width={156} height={102} className="block w-[156px] shrink-0">
      <rect width="156" height="102" fill="#0e0909" />
      <path d="M0 0H60L84 16L62 40L24 36L0 22Z" fill="#1a1311" />
      <path d="M0 44L30 48L58 70L44 102H0Z" fill="#1d1513" />
      <path d="M78 50L118 30L156 50V102H70Z" fill="#150f0e" />
      <path d="M100 70L134 62L150 88L116 102H92Z" fill="#1f1715" />
    </svg>
  );
}
function WallRight() {
  return (
    <svg viewBox="0 0 162 102" width={162} height={102} className="block w-[162px] shrink-0">
      <rect width="162" height="102" fill="#1d2a3d" />
      <path d="M0 0H32L22 26L40 44L14 58L0 50Z" fill="#0d1019" />
      <path d="M52 4L86 0L98 20L78 42L58 30Z" fill="#27374f" />
      <path d="M100 0H162V34L132 46L112 24Z" fill="#0f131c" />
      <path d="M60 52L92 46L118 66L96 96L66 84Z" fill="#0e1119" />
      <path d="M126 58L162 50V102H118Z" fill="#2a3b55" />
      <path d="M0 70L12 64L30 78L24 96L40 102H0Z" fill="#4d2f22" />
      <circle cx="8" cy="76" r="3" fill="#b8612f" />
      <circle cx="17" cy="86" r="3" fill="#c9702f" />
      <circle cx="6" cy="92" r="3.5" fill="#a8552b" />
      <circle cx="27" cy="94" r="2.5" fill="#bb6630" />
      <path d="M40 64L54 70L48 92L34 84Z" fill="#0f1119" />
    </svg>
  );
}

function Dock() {
  return (
    <div className="relative z-10 h-[102px] shrink-0 flex bg-[#120c0c]">
      <WallLeft />
      <div className="flex-1 flex pl-[6px] pt-[6px] rounded-t-[10px] shadow-[0_0_44px_rgba(0,0,0,0.16)] bg-[linear-gradient(90deg,#5a5050_0%,#5a5050_37%,#5e5c60_53%,#687083_70%,#7f6f78_76%,#bf7052_82%,#a2695a_88%,#80656a_96%,#6e6670_100%)]">
        {dockItems.map((d, i) => (
          <div key={i} className="w-[84px] shrink-0 flex flex-col items-center">
            {d.icon}
            {d.running ? <span className="w-[8px] h-[8px] rounded-full bg-[#0a0505]" /> : null}
          </div>
        ))}
        <div className="w-[2px] h-[73px] mt-[8px] ml-[18px] shrink-0 bg-[#6e3d3a]" />
        <div className="w-[84px] ml-[15px] shrink-0"><Trash /></div>
      </div>
      <WallRight />
    </div>
  );
}

export default function App() {
  return (
    <div className="w-[2880px] h-[1800px] flex flex-col overflow-hidden bg-[linear-gradient(90deg,#120c0c_0%,#16202f_100%)] font-['Inter','Noto_Sans',sans-serif]">
      <MenuBar />
      <div className="flex-1 min-h-0 flex flex-col border-t-[2px] border-[#3a2828] rounded-t-[10px]">
        <TabBar />
        <ToolBar />
        <Page />
      </div>
      <Dock />
    </div>
  );
}
